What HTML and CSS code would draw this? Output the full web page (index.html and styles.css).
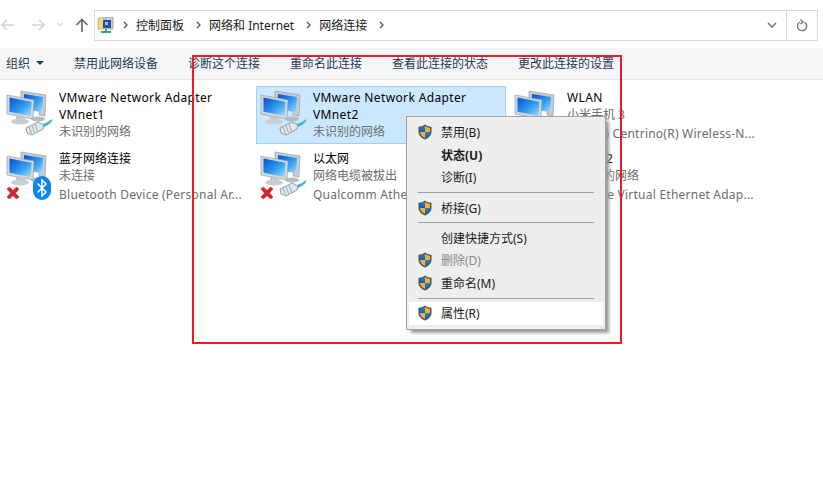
FILE: index.html
```html
<!DOCTYPE html>
<html lang="zh-CN">
<head>
    <meta charset="UTF-8">
    <title>网络连接</title>
    <link rel="stylesheet" href="styles.css">
</head>
<body>
    <svg class="defs" width="0" height="0">
        <defs>
            <linearGradient id="screen" x1="0" y1="0" x2="1" y2="1">
                <stop offset="0" stop-color="#0a4fd0"/>
                <stop offset="0.55" stop-color="#2f9bf0"/>
                <stop offset="1" stop-color="#a5dcf8"/>
            </linearGradient>
            <linearGradient id="shieldBlue" x1="0" y1="0" x2="0" y2="1">
                <stop offset="0" stop-color="#2a86d8"/>
                <stop offset="1" stop-color="#0d5fb0"/>
            </linearGradient>
            <symbol id="monitors" viewBox="0 0 48 36">
                <!-- monitor at the back -->
                <path d="M16 2 L41 6 L40 27 L34 26 L34 22 L16 20 Z" fill="#c4ccd2" stroke="#8b959c" stroke-width=".6"/>
                <path d="M19 5 L38 8 L37 23 L19 20 Z" fill="url(#screen)"/>
                <ellipse cx="33" cy="30" rx="7" ry="2.500" fill="#b5bcc0"/>
                <!-- monitor in front -->
                <path d="M2 6 L29 11 L28 30 L2 25 Z" fill="#d2d8dc" stroke="#8b959c" stroke-width=".6"/>
                <path d="M4.500 8.500 L26.500 12.800 L25.800 27 L4.500 22.800 Z" fill="url(#screen)"/>
                <path d="M11 27 L20 29 L20 31 L11 30 Z" fill="#c0c6ca"/>
                <ellipse cx="15" cy="32.500" rx="9" ry="3" fill="#c8ced2"/>
            </symbol>
            <symbol id="plug" viewBox="0 0 28 18">
                <path d="M1 10 L13 4 L19 7 L18 11 L7 17 L2 15 Z" fill="#e3e8ec" stroke="#7b8a94" stroke-width=".8"/>
                <path d="M4 9 L6.500 15.500 M7 7.500 L9.500 14.500 M10 6 L12.500 13" stroke="#7b8a94" stroke-width=".7" fill="none"/>
                <path d="M18 6 L23 4 L27 1 L27 3.500 L23 7 L19 9 Z" fill="#3fb2d8"/>
            </symbol>
            <symbol id="redx" viewBox="0 0 14 14">
                <path d="M1 3 L3.500 1 L7 4.500 L10.500 1 L13 3 L9.500 7 L13 11 L10.500 13 L7 9.500 L3.500 13 L1 11 L4.500 7 Z" fill="#d3232a" stroke="#a8161c" stroke-width=".5"/>
            </symbol>
            <symbol id="shield" viewBox="0 0 14 16">
                <path d="M7 .5 C9 2 11 2.700 13.500 2.700 L13.500 8 C13.500 11.500 10.500 14 7 15.500 C3.500 14 .5 11.500 .5 8 L.5 2.700 C3 2.700 5 2 7 .5 Z" fill="#4a5560"/>
                <path d="M7 2 L7 8 L2 8 L2 3.800 C3.800 3.700 5.500 3.100 7 2 Z" fill="url(#shieldBlue)"/>
                <path d="M7 2 C8.500 3.100 10.200 3.700 12 3.800 L12 8 L7 8 Z" fill="#f4b42a"/>
                <path d="M2 8 L7 8 L7 14 C4.500 12.800 2.300 11 2 8 Z" fill="#f4b42a"/>
                <path d="M7 8 L12 8 C11.700 11 9.500 12.800 7 14 Z" fill="url(#shieldBlue)"/>
            </symbol>
        </defs>
    </svg>

    <div class="nav-bar">
        <div class="nav-buttons">
            <svg class="nav-icon" width="16" height="14" viewBox="0 0 16 14"><path d="M7 2 L2 7 L7 12 M2 7 L14 7" fill="none" stroke="#d4d4d4" stroke-width="1.600"/></svg>
            <svg class="nav-icon forward" width="16" height="14" viewBox="0 0 16 14"><path d="M9 2 L14 7 L9 12 M14 7 L2 7" fill="none" stroke="#d4d4d4" stroke-width="1.600"/></svg>
            <svg class="nav-icon down" width="8" height="6" viewBox="0 0 8 6"><path d="M1 1 L4 4 L7 1" fill="none" stroke="#d4d4d4" stroke-width="1.200"/></svg>
            <svg class="nav-icon up" width="14" height="15" viewBox="0 0 14 15"><path d="M1.500 7 L7 1.500 L12.500 7 M7 2 L7 14" fill="none" stroke="#6d6d6d" stroke-width="1.700"/></svg>
        </div>
        <div class="address-bar">
            <svg class="address-icon" width="17" height="17" viewBox="0 0 17 17">
                <rect x="1" y="1" width="6" height="11" fill="#f0d878" stroke="#b09a40" stroke-width=".6"/>
                <rect x="8" y="0" width="8" height="12" fill="#c8ccd0" stroke="#80888e" stroke-width=".6"/>
                <rect x="6" y="3" width="8" height="8" fill="#1f4fb0"/>
                <rect x="8" y="5" width="3" height="3" fill="#8fd0f0"/>
                <path d="M8 12 L10 12 L10 14 L14 14 L14 16 L4 16 L4 14 L8 14 Z" fill="#2fae5a"/>
            </svg>
            <svg class="crumb-arrow" width="6" height="8" viewBox="0 0 6 8"><path d="M1 1 L4 4 L1 7" fill="none" stroke="#555" stroke-width="1.300"/></svg>
            <span class="crumb">控制面板</span>
            <svg class="crumb-arrow" width="6" height="8" viewBox="0 0 6 8"><path d="M1 1 L4 4 L1 7" fill="none" stroke="#555" stroke-width="1.300"/></svg>
            <span class="crumb">网络和 Internet</span>
            <svg class="crumb-arrow" width="6" height="8" viewBox="0 0 6 8"><path d="M1 1 L4 4 L1 7" fill="none" stroke="#555" stroke-width="1.300"/></svg>
            <span class="crumb">网络连接</span>
            <svg class="crumb-arrow" width="6" height="8" viewBox="0 0 6 8"><path d="M1 1 L4 4 L1 7" fill="none" stroke="#555" stroke-width="1.300"/></svg>
            <svg class="address-drop" width="10" height="7" viewBox="0 0 10 7"><path d="M1 1 L5 5 L9 1" fill="none" stroke="#6d6d6d" stroke-width="1.500"/></svg>
            <div class="refresh">
                <svg width="12" height="13" viewBox="0 0 12 13"><path d="M8.500 3.200 A4.600 4.600 0 1 1 4 3 M4.500 .5 L7 3 L4.500 5" fill="none" stroke="#6d6d6d" stroke-width="1.300"/></svg>
            </div>
        </div>
    </div>

    <div class="toolbar">
        <span class="tool tool-org">组织<i class="caret"></i></span>
        <span class="tool">禁用此网络设备</span>
        <span class="tool">诊断这个连接</span>
        <span class="tool">重命名此连接</span>
        <span class="tool">查看此连接的状态</span>
        <span class="tool">更改此连接的设置</span>
    </div>

    <div class="items">
        <div class="item">
            <div class="item-icon">
                <svg class="pc" width="48" height="36"><use href="#monitors"/></svg>
                <svg class="plug" width="28" height="18"><use href="#plug"/></svg>
            </div>
            <div class="item-text">
                <div class="name latin">VMware Network Adapter<br>VMnet1</div>
                <div class="sub">未识别的网络</div>
            </div>
        </div>
        <div class="item selected">
            <div class="item-icon">
                <svg class="pc" width="48" height="36"><use href="#monitors"/></svg>
                <svg class="plug" width="28" height="18"><use href="#plug"/></svg>
            </div>
            <div class="item-text">
                <div class="name latin">VMware Network Adapter<br>VMnet2</div>
                <div class="sub">未识别的网络</div>
            </div>
        </div>
        <div class="item">
            <div class="item-icon">
                <svg class="pc" width="48" height="36"><use href="#monitors"/></svg>
            </div>
            <div class="item-text">
                <div class="name latin">WLAN</div>
                <div class="sub">小米手机 3</div>
                <div class="sub device latin">Intel(R) Centrino(R) Wireless-N...</div>
            </div>
        </div>
        <div class="item">
            <div class="item-icon">
                <svg class="pc" width="48" height="36"><use href="#monitors"/></svg>
                <svg class="redx" width="14" height="14"><use href="#redx"/></svg>
                <svg class="bt" width="18" height="24" viewBox="0 0 18 24">
                    <rect x="0" y="0" width="18" height="24" rx="9" fill="#0a84ee"/>
                    <path d="M4.500 7.500 L13 16 L9 20 L9 4 L13 8 L4.500 16.500" fill="none" stroke="#fff" stroke-width="1.500"/>
                </svg>
            </div>
            <div class="item-text">
                <div class="name">蓝牙网络连接</div>
                <div class="sub">未连接</div>
                <div class="sub device latin">Bluetooth Device (Personal Ar...</div>
            </div>
        </div>
        <div class="item">
            <div class="item-icon">
                <svg class="pc" width="48" height="36"><use href="#monitors"/></svg>
                <svg class="plug" width="28" height="18"><use href="#plug"/></svg>
                <svg class="redx" width="14" height="14"><use href="#redx"/></svg>
            </div>
            <div class="item-text">
                <div class="name">以太网</div>
                <div class="sub">网络电缆被拔出</div>
                <div class="sub device latin">Qualcomm Atheros AR8171</div>
            </div>
        </div>
        <div class="item">
            <div class="item-icon">
                <svg class="pc" width="48" height="36"><use href="#monitors"/></svg>
            </div>
            <div class="item-text">
                <div class="name">以太网 2</div>
                <div class="sub">未识别的网络</div>
                <div class="sub device latin">VMware Virtual Ethernet Adap...</div>
            </div>
        </div>
    </div>

    <div class="context-menu">
        <div class="menu-row"><svg class="shield" width="14" height="16"><use href="#shield"/></svg>禁用(B)</div>
        <div class="menu-row bold">状态(U)</div>
        <div class="menu-row">诊断(I)</div>
        <div class="menu-sep"></div>
        <div class="menu-row"><svg class="shield" width="14" height="16"><use href="#shield"/></svg>桥接(G)</div>
        <div class="menu-sep"></div>
        <div class="menu-row">创建快捷方式(S)</div>
        <div class="menu-row disabled"><svg class="shield" width="14" height="16"><use href="#shield"/></svg>删除(D)</div>
        <div class="menu-row"><svg class="shield" width="14" height="16"><use href="#shield"/></svg>重命名(M)</div>
        <div class="menu-sep"></div>
        <div class="menu-row hover"><svg class="shield" width="14" height="16"><use href="#shield"/></svg>属性(R)</div>
    </div>

    <div class="red-box"></div>
</body>
</html>
```

FILE: styles.css
```css
* {
    box-sizing: border-box;
}

html, body {
    height: 100%;
}

body {
    margin: 0;
    background-color: #fff;
    font-family: "Noto Sans", "Noto Sans CJK SC", sans-serif;
    font-size: 12px;
    color: #000;
    overflow: hidden;
}

.defs {
    position: absolute;
}

/* top row */
.nav-bar {
    display: flex;
    align-items: center;
    height: 48px;
    padding: 2px 5px 0 0;
}

.nav-buttons {
    display: flex;
    align-items: center;
    width: 94px;
}

.nav-icon.forward {
    margin-left: 14px;
}

.nav-icon.down {
    margin-left: 10px;
}

.nav-icon.up {
    margin-left: 11px;
}

.address-bar {
    flex: 1;
    display: flex;
    align-items: center;
    height: 31px;
    border: 1px solid #d9d9d9;
    padding-left: 2px;
}

.address-icon {
    margin-right: 9px;
}

.crumb {
    margin: 0 12px 0 7px;
    color: #1a1a1a;
    white-space: nowrap;
}

.crumb-arrow {
    flex: none;
}

.address-drop {
    margin-left: auto;
    margin-right: 9px;
}

.refresh {
    display: flex;
    align-items: center;
    justify-content: center;
    width: 31px;
    height: 100%;
    border-left: 1px solid #d9d9d9;
}

/* command bar */
.toolbar {
    display: flex;
    align-items: center;
    gap: 30px;
    height: 32px;
    padding-left: 6px;
    padding-bottom: 1px;
    background-color: #f5f6f7;
    border-bottom: 1px solid #e6e6e6;
    color: #1e395b;
}

.tool {
    white-space: nowrap;
}

.tool-org {
    display: flex;
    align-items: center;
    width: 38px;
}

.caret {
    margin-left: 6px;
    border-left: 4px solid transparent;
    border-right: 4px solid transparent;
    border-top: 4px solid #1e395b;
}

/* connections */
.items {
    display: grid;
    grid-template-columns: repeat(3, 250px);
    grid-auto-rows: 58px;
    column-gap: 4px;
    row-gap: 3px;
    padding: 6px 0 0 2px;
}

.item {
    position: relative;
    display: flex;
    border: 1px solid transparent;
    padding-left: 56px;
}

.item.selected {
    background-color: #cce8ff;
    border-color: #99d1ff;
}

.item-icon {
    position: absolute;
    left: 2px;
    top: 2px;
    width: 52px;
    height: 52px;
}

.pc {
    position: absolute;
    left: 0;
    top: 0;
}

.plug {
    position: absolute;
    left: 20px;
    top: 29px;
}

.redx {
    position: absolute;
    left: 1px;
    top: 36px;
}

.bt {
    position: absolute;
    left: 28px;
    top: 26px;
}

.item-text {
    padding-top: 2px;
    line-height: 17px;
    white-space: nowrap;
}

.sub {
    color: #6d6d6d;
    line-height: 18px;
}

.name + .sub {
    line-height: 17.500px;
}

.device {
    margin-top: 1px;
}

.name.latin {
    letter-spacing: .36px;
}

.device.latin {
    letter-spacing: .24px;
}

/* right click menu */
.context-menu {
    position: absolute;
    left: 406px;
    top: 116px;
    width: 200px;
    height: 214px;
    padding: 4px 2px;
    background-color: #eee;
    border: 1px solid #a0a0a0;
    box-shadow: 4px 4px 3px -1px #9a9a9a;
    color: #1a1a1a;
}

.menu-row {
    position: relative;
    height: 22.700px;
    line-height: 24px;
    padding-left: 32px;
}

.menu-sep + .menu-row {
    line-height: 23px;
}

.menu-row.bold {
    font-weight: bold;
}

.menu-row.disabled {
    color: #8a8a8a;
}

.menu-sep + .menu-row.hover {
    background-color: #fff;
    line-height: 24px;
}

.shield {
    position: absolute;
    left: 9px;
    top: 3px;
}

.menu-sep {
    height: 7.500px;
    margin: 0 9px;
    padding-top: 3px;
}

.menu-sep::after {
    content: "";
    display: block;
    height: 1px;
    background-color: #a0a0a0;
}

/* annotation drawn on the screenshot */
.red-box {
    position: absolute;
    left: 192px;
    top: 55px;
    width: 430px;
    height: 289px;
    border: 2px solid #ed1c24;
    pointer-events: none;
}
```
